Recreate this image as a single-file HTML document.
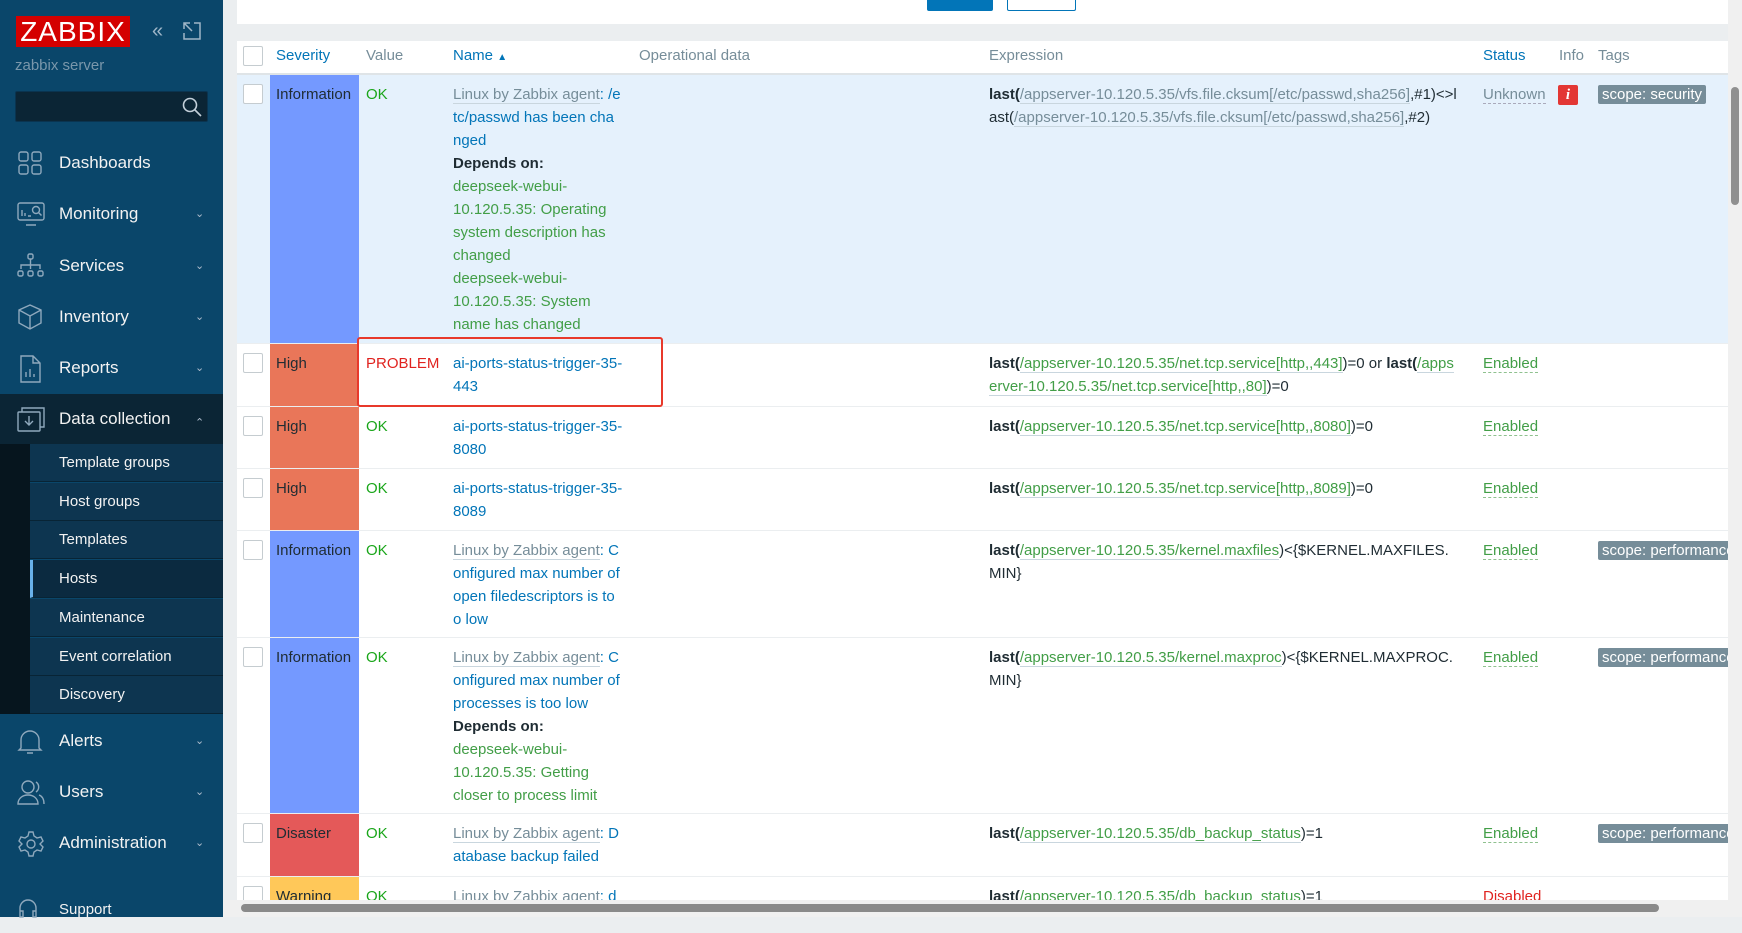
<!DOCTYPE html>
<html><head><meta charset="utf-8"><style>
*{box-sizing:border-box;margin:0;padding:0}
body{width:1742px;height:917px;overflow:hidden;background:#ebeef0;font-family:"Liberation Sans",Arial,sans-serif;font-size:15px;position:relative}
#sb{position:absolute;left:0;top:0;width:223px;height:917px;background:#0a466a;color:#f2f2f2}
.logo{position:absolute;left:16px;top:16px;width:114px;height:31px;background:#d40000;color:#fff;font-size:28px;line-height:31px;text-align:center;letter-spacing:1px}
.srv{position:absolute;left:15px;top:57px;color:#7a97ab;font-size:15px}
.search{position:absolute;left:15px;top:91px;width:193px;height:31px;background:#0b2535;border-radius:2px;border:1px solid #0a3450}
.mi{position:absolute;left:0;width:223px;height:46px;font-size:17px;line-height:46px}
.mi .t{position:absolute;left:59px}
.mi .ch{position:absolute;left:195px;font-size:11px;color:#aebccc}
.mi svg{position:absolute;left:17px;top:10px}
.sub{position:absolute;left:30px;width:193px;height:38px;background:#0d3550;border-bottom:1px solid #082435;font-size:15px;line-height:38px;padding-left:29px}
.row{position:absolute;left:237px;width:1491px;background:#fff;border-bottom:1px solid #ebeef0;line-height:23px}
.row>div{position:absolute;top:8px}
.cb{left:6px !important;width:20px;height:20px;border:1px solid #c5ccd0;background:#fff;border-radius:2px;top:9px !important}
.sev{left:33px !important;top:0 !important;bottom:0;width:89px;padding:8px 0 0 6px;color:#1f2c33}
.val{left:129px}
.nm{left:216px;width:175px;word-break:break-all;color:#0275b8}
.ex{left:752px;width:477px;word-break:break-all;color:#1f2c33}
.st{left:1246px}
.g{color:#429e47}.gr{color:#768d99}.b{font-weight:bold}
.ok{color:#1aa61a}
u{text-decoration:none;border-bottom:1px solid #c9d6de}
.tag{left:1361px;top:10px !important;background:#768d99;color:#fff;padding:0 4px;line-height:19px;border-radius:2px;white-space:nowrap}
.stu{border-bottom:1px dashed #8fc18f}
</style></head><body>
<div id="sb">
<div class="logo">ZABBIX</div>
<div style="position:absolute;left:152px;top:20px;color:#9fb6c8;font-size:20px">&laquo;</div>
<svg style="position:absolute;left:183px;top:22px" width="18" height="18" viewBox="0 0 18 18" fill="none" stroke="#9fb6c8" stroke-width="1.5"><path d="M1 7V1h6M1 1l8 8M11 1h6v16H1v-6"/></svg>
<div class="srv">zabbix server</div>
<div class="search"><svg style="position:absolute;left:166px;top:5px" width="20" height="20" viewBox="0 0 20 20" fill="none" stroke="#c3d0da" stroke-width="1.6"><circle cx="8" cy="8" r="6.5"/><path d="M13 13l6 6"/></svg></div>
<div class="mi" style="top:140px"><svg width="26" height="26" viewBox="0 0 26 26" fill="none" stroke="#8fa9bd" stroke-width="1.4"><rect x="2" y="2" width="9" height="9" rx="2"/><rect x="15" y="2" width="9" height="9" rx="2"/><rect x="2" y="15" width="9" height="9" rx="2"/><rect x="15" y="15" width="9" height="9" rx="2"/></svg><span class="t">Dashboards</span></div>
<div class="mi" style="top:191px"><svg width="28" height="26" viewBox="0 0 28 26" fill="none" stroke="#8fa9bd" stroke-width="1.4"><rect x="1" y="2" width="26" height="17" rx="2"/><path d="M9 24h10M5 15V9M8 15v-3M11 15h3"/><circle cx="19" cy="9" r="3.5"/><path d="M21.5 11.5l3 3"/></svg><span class="t">Monitoring</span><span class="ch">&#8964;</span></div>
<div class="mi" style="top:243px"><svg width="28" height="26" viewBox="0 0 28 26" fill="none" stroke="#8fa9bd" stroke-width="1.4"><rect x="11" y="1" width="5" height="5" rx="1.5"/><path d="M13.5 6v6M4 16v-4h19v4M13.5 12v4"/><rect x="1" y="18" width="5" height="5" rx="1.5"/><rect x="11" y="18" width="5" height="5" rx="1.5"/><rect x="21" y="18" width="5" height="5" rx="1.5"/></svg><span class="t">Services</span><span class="ch">&#8964;</span></div>
<div class="mi" style="top:294px"><svg width="26" height="26" viewBox="0 0 26 26" fill="none" stroke="#8fa9bd" stroke-width="1.4"><path d="M13 1l11 5v13l-11 6-11-6V6zM2 6l11 6 11-6M13 12v13"/></svg><span class="t">Inventory</span><span class="ch">&#8964;</span></div>
<div class="mi" style="top:345px"><svg width="26" height="28" viewBox="0 0 26 28" fill="none" stroke="#8fa9bd" stroke-width="1.4"><path d="M4 1h12l7 7v19H4zM16 1v7h7M9 22v-5M13 22v-8M17 22v-3"/></svg><span class="t">Reports</span><span class="ch">&#8964;</span></div>
<div class="mi" style="top:394px;height:50px;line-height:50px;background:#0b2535"><svg style="top:12px" width="28" height="26" viewBox="0 0 28 26" fill="none" stroke="#8fa9bd" stroke-width="1.4"><rect x="1" y="6" width="22" height="19" rx="1"/><path d="M5 6V2h22v19h-4M12 10v9M8 15l4 4 4-4"/></svg><span class="t">Data collection</span><span class="ch" style="top:4px">&#8963;</span></div>
<div style="position:absolute;left:0;top:444px;width:30px;height:270px;background:#06151e"></div>
<div class="sub" style="top:444px">Template groups</div>
<div class="sub" style="top:483px">Host groups</div>
<div class="sub" style="top:521px">Templates</div>
<div class="sub" style="top:560px;background:#0b2a40;border-left:3px solid #69b1ea;padding-left:26px">Hosts</div>
<div class="sub" style="top:599px">Maintenance</div>
<div class="sub" style="top:638px">Event correlation</div>
<div class="sub" style="top:676px;height:38px">Discovery</div>
<div class="mi" style="top:718px"><svg width="26" height="28" viewBox="0 0 26 28" fill="none" stroke="#8fa9bd" stroke-width="1.4"><path d="M4 20V12a9 9 0 0118 0v8l2 2H2zM10 25h6"/></svg><span class="t">Alerts</span><span class="ch">&#8964;</span></div>
<div class="mi" style="top:769px"><svg width="28" height="28" viewBox="0 0 28 28" fill="none" stroke="#8fa9bd" stroke-width="1.4"><circle cx="11" cy="8" r="6"/><path d="M1 25c0-6 5-9 10-9s10 3 10 9zM19 3a6 6 0 010 10M22 16c3 1 5 4 5 9"/></svg><span class="t">Users</span><span class="ch">&#8964;</span></div>
<div class="mi" style="top:820px"><svg width="28" height="28" viewBox="0 0 28 28" fill="none" stroke="#8fa9bd" stroke-width="1.4"><circle cx="14" cy="14" r="4"/><path d="M12 2h4l1 4 3 2 4-1 2 4-3 3v0l3 3-2 4-4-1-3 2-1 4h-4l-1-4-3-2-4 1-2-4 3-3-3-3 2-4 4 1 3-2z"/></svg><span class="t">Administration</span><span class="ch">&#8964;</span></div>
<div class="mi" style="top:887px;font-size:15px"><svg width="22" height="22" viewBox="0 0 22 22" fill="none" stroke="#8fa9bd" stroke-width="1.4"><path d="M3 18v-7a8 8 0 0116 0v7M3 14h3v6H3zM16 14h3v6h-3z"/></svg><span class="t">Support</span></div>
</div>

<div style="position:absolute;left:237px;top:0;width:1491px;height:24px;background:#fff"></div>
<div style="position:absolute;left:927px;top:0;width:66px;height:11px;background:#0275b8;border-radius:0 0 2px 2px"></div>
<div style="position:absolute;left:1007px;top:0;width:69px;height:11px;border:1px solid #0275b8;border-top:0;background:#fff;border-radius:0 0 2px 2px"></div>

<div class="row" style="top:41px;height:34px;border-bottom:2px solid #dfe4e7;color:#768d99">
<div class="cb" style="top:5px !important"></div>
<div style="left:39px;top:3px;color:#0275b8">Severity</div>
<div style="left:129px;top:3px">Value</div>
<div style="left:216px;top:3px;color:#0275b8">Name <span style="font-size:10px">&#9650;</span></div>
<div style="left:402px;top:3px">Operational data</div>
<div style="left:752px;top:3px">Expression</div>
<div style="left:1246px;top:3px;color:#0275b8">Status</div>
<div style="left:1322px;top:3px">Info</div>
<div style="left:1361px;top:3px">Tags</div>
</div>

<div class="row" style="top:75px;height:269px;background:#e5f1fc">
<div class="cb"></div><div class="sev" style="background:#7499ff">Information</div>
<div class="val ok">OK</div>
<div class="nm"><u class="gr">Linux by Zabbix agent</u>: /e<br>tc/passwd has been cha<br>nged<br><span class="b" style="color:#1f2c33">Depends on:</span><br><span class="g" style="word-break:normal">deepseek-webui-<br>10.120.5.35: Operating system description has changed<br>deepseek-webui-<br>10.120.5.35: System<br>name has changed</span></div>
<div class="ex"><span class="b">last(</span><u class="gr">/appserver-10.120.5.35/vfs.file.cksum[/etc/passwd,sha256]</u>,#1)&lt;&gt;l<br>ast(<u class="gr">/appserver-10.120.5.35/vfs.file.cksum[/etc/passwd,sha256]</u>,#2)</div>
<div class="st gr"><span style="border-bottom:1px dashed #aab">Unknown</span></div>
<div style="left:1321px;top:10px;width:20px;height:20px;background:#e33734;color:#fff;border-radius:2px;text-align:center;line-height:20px;font-weight:bold;font-style:italic;font-family:'Liberation Serif',serif">i</div>
<div class="tag">scope: security</div>
</div>

<div class="row" style="top:344px;height:63px">
<div class="cb"></div><div class="sev" style="background:#e97659">High</div>
<div class="val" style="color:#e0231f">PROBLEM</div>
<div class="nm">ai-ports-status-trigger-35-<br>443</div>
<div class="ex"><span class="b">last(</span><u class="g">/appserver-10.120.5.35/net.tcp.service[http,,443]</u>)=0 or <span class="b">last(</span><u class="g">/apps<br>erver-10.120.5.35/net.tcp.service[http,,80]</u>)=0</div>
<div class="st g"><span class="stu">Enabled</span></div>
</div>

<div class="row" style="top:407px;height:62px">
<div class="cb"></div><div class="sev" style="background:#e97659">High</div>
<div class="val ok">OK</div>
<div class="nm">ai-ports-status-trigger-35-<br>8080</div>
<div class="ex"><span class="b">last(</span><u class="g">/appserver-10.120.5.35/net.tcp.service[http,,8080]</u>)=0</div>
<div class="st g"><span class="stu">Enabled</span></div>
</div>

<div class="row" style="top:469px;height:62px">
<div class="cb"></div><div class="sev" style="background:#e97659">High</div>
<div class="val ok">OK</div>
<div class="nm">ai-ports-status-trigger-35-<br>8089</div>
<div class="ex"><span class="b">last(</span><u class="g">/appserver-10.120.5.35/net.tcp.service[http,,8089]</u>)=0</div>
<div class="st g"><span class="stu">Enabled</span></div>
</div>

<div class="row" style="top:531px;height:107px">
<div class="cb"></div><div class="sev" style="background:#7499ff">Information</div>
<div class="val ok">OK</div>
<div class="nm"><u class="gr">Linux by Zabbix agent</u>: C<br>onfigured max number of<br>open filedescriptors is to<br>o low</div>
<div class="ex"><span class="b">last(</span><u class="g">/appserver-10.120.5.35/kernel.maxfiles</u>)&lt;{$KERNEL.MAXFILES.<br>MIN}</div>
<div class="st g"><span class="stu">Enabled</span></div>
<div class="tag">scope: performance</div>
</div>

<div class="row" style="top:638px;height:176px">
<div class="cb"></div><div class="sev" style="background:#7499ff">Information</div>
<div class="val ok">OK</div>
<div class="nm"><u class="gr">Linux by Zabbix agent</u>: C<br>onfigured max number of<br>processes is too low<br><span class="b" style="color:#1f2c33">Depends on:</span><br><span class="g" style="word-break:normal">deepseek-webui-<br>10.120.5.35: Getting<br>closer to process limit</span></div>
<div class="ex"><span class="b">last(</span><u class="g">/appserver-10.120.5.35/kernel.maxproc</u>)&lt;{$KERNEL.MAXPROC.<br>MIN}</div>
<div class="st g"><span class="stu">Enabled</span></div>
<div class="tag">scope: performance</div>
</div>

<div class="row" style="top:814px;height:63px">
<div class="cb"></div><div class="sev" style="background:#e45959">Disaster</div>
<div class="val ok">OK</div>
<div class="nm"><u class="gr">Linux by Zabbix agent</u>: D<br>atabase backup failed</div>
<div class="ex"><span class="b">last(</span><u class="g">/appserver-10.120.5.35/db_backup_status</u>)=1</div>
<div class="st g"><span class="stu">Enabled</span></div>
<div class="tag">scope: performance</div>
</div>

<div class="row" style="top:877px;height:40px">
<div class="cb"></div><div class="sev" style="background:#ffc859">Warning</div>
<div class="val ok">OK</div>
<div class="nm"><u class="gr">Linux by Zabbix agent</u>: d</div>
<div class="ex"><span class="b">last(</span><u class="g">/appserver-10.120.5.35/db_backup_status</u>)=1</div>
<div class="st" style="color:#e0231f">Disabled</div>
</div>

<div style="position:absolute;left:357px;top:337px;width:306px;height:70px;border:2px solid #e8392b;border-radius:3px"></div>

<div style="position:absolute;left:1728px;top:0;width:14px;height:900px;background:#f0f0f0"></div>
<div style="position:absolute;left:1731px;top:87px;width:8px;height:118px;background:#909090;border-radius:4px"></div>
<div style="position:absolute;left:223px;top:900px;width:1519px;height:17px;background:#f0f0f0"></div>
<div style="position:absolute;left:241px;top:904px;width:1418px;height:8px;background:#8a8a8a;border-radius:4px"></div>
</body></html>
